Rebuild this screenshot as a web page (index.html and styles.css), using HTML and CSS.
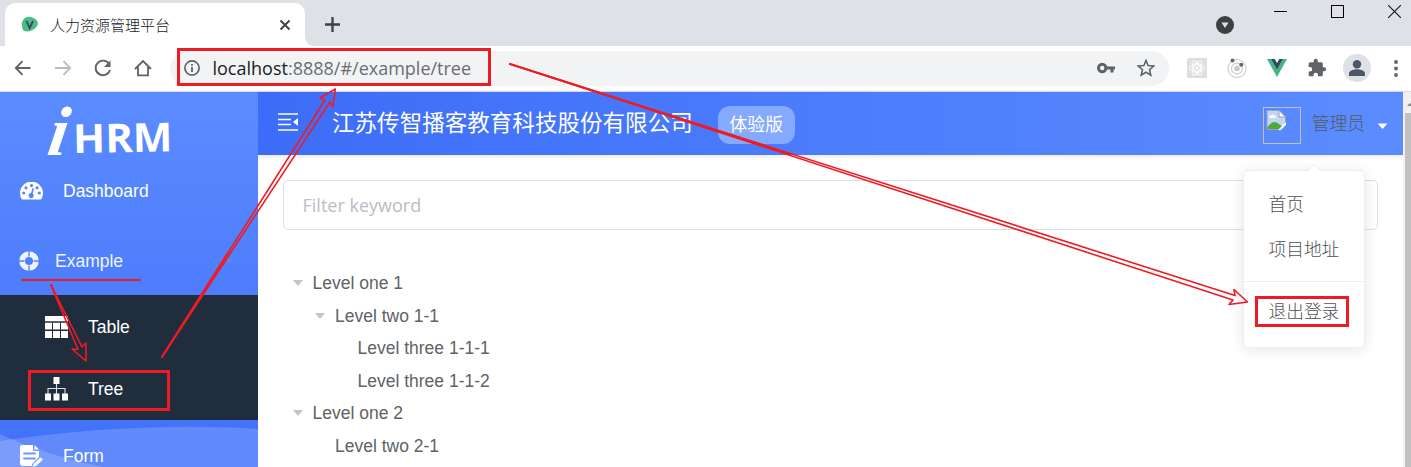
FILE: index.html
```
<!DOCTYPE html>
<html lang="zh-CN">
<head>
<meta charset="utf-8">
<title>人力资源管理平台</title>
<link rel="stylesheet" href="styles.css">
</head>
<body>
<div class="browser">
  <div class="tabstrip">
    <div class="tab">
      <svg class="favicon" width="18" height="18" viewBox="0 0 18 18"><path d="M2 4Q5 0 10 1Q17 3 17 8Q15 14 7 15.500Q1 16 1 10Q0 7 2 4Z" fill="#4dba87"/><path d="M5.500 5L8.700 12L12 5" fill="none" stroke="#35495e" stroke-width="1.800"/></svg>
      <span class="tab-title">人力资源管理平台</span>
      <svg class="tab-close" width="12" height="12" viewBox="0 0 12 12"><path d="M1.500 1.500L10.500 10.500M10.500 1.500L1.500 10.500" stroke="#3c4043" stroke-width="1.900"/></svg>
    </div>
    <svg class="tab-curve" width="10" height="10"><path d="M0 0Q0 10 10 10H0Z" fill="#fff"/></svg>
    <svg class="new-tab" width="15" height="15"><path d="M7.500 0V15M0 7.500H15" stroke="#3c4043" stroke-width="2.300"/></svg>
    <div class="window-controls">
      <svg class="tab-search" width="18" height="18"><circle cx="9" cy="9" r="9" fill="#3c4043"/><path d="M5.500 6.500H12.500L9 12Z" fill="#dee1e6"/></svg>
      <svg width="13" height="13"><path d="M0 6.500H13" stroke="#000"/></svg>
      <svg width="13" height="13"><rect x=".5" y=".5" width="12" height="12" fill="none" stroke="#000"/></svg>
      <svg width="13" height="13"><path d="M0 0L13 13M13 0L0 13" stroke="#111" stroke-width="1.100"/></svg>
    </div>
  </div>
  <div class="toolbar">
    <div class="nav-icons">
      <svg width="18" height="18" fill="none" stroke="#5f6368" stroke-width="1.800"><path d="M16.500 9H2M8.500 2.200L1.800 9L8.500 15.800"/></svg>
      <svg width="18" height="18" fill="none" stroke="#bbbdc0" stroke-width="1.800"><path d="M1 9H16M9.500 2.200L16.200 9L9.500 15.800"/></svg>
      <svg width="18" height="18"><path d="M15.300 5.200A7.300 7.300 0 1 0 16 11" fill="none" stroke="#5f6368" stroke-width="1.900"/><path d="M16.500 1.500V8H10Z" fill="#5f6368"/></svg>
      <svg width="18" height="18" fill="none" stroke="#5f6368" stroke-width="1.800"><path d="M1 10L9 2L17 10M4 8V16.300H14V8"/></svg>
    </div>
    <div class="omnibox">
      <svg width="16" height="16"><circle cx="8" cy="8" r="7.100" fill="none" stroke="#5f6368" stroke-width="1.700"/><path d="M8 7V12M8 4V5.800" stroke="#5f6368" stroke-width="1.800"/></svg>
      <span class="url"><b>localhost</b>:8888/#/example/tree</span>
      <svg class="key" width="18" height="12"><circle cx="5.200" cy="6" r="3.700" fill="none" stroke="#5f6368" stroke-width="3"/><path d="M8.500 6H18M15 6V10.500" stroke="#5f6368" stroke-width="3"/></svg>
      <svg class="star" width="18" height="18" viewBox="0 0 18 18"><path d="M9 1.500L11.100 6.500L16.700 7L12.500 10.700L13.800 16.200L9 13.300L4.200 16.200L5.500 10.700L1.300 7L6.900 6.500Z" fill="none" stroke="#5f6368" stroke-width="1.600"/></svg>
    </div>
    <div class="extensions">
      <svg width="20" height="20" viewBox="0 0 20 20"><rect width="20" height="20" rx="1.500" fill="#dedede"/><g fill="none" stroke="#fff" stroke-width=".9"><ellipse cx="10" cy="10" rx="8" ry="3.200"/><ellipse cx="10" cy="10" rx="8" ry="3.200" transform="rotate(60 10 10)"/><ellipse cx="10" cy="10" rx="8" ry="3.200" transform="rotate(120 10 10)"/><circle cx="10" cy="10" r="5"/></g><circle cx="10" cy="10" r="1.500" fill="#fff"/></svg>
      <svg width="20" height="20"><circle cx="10" cy="10.500" r="9" fill="none" stroke="#d4d4d4" stroke-width="1.300"/><circle cx="10" cy="10.500" r="5.500" fill="none" stroke="#d0d0d0" stroke-width="1.300"/><circle cx="10" cy="10.500" r="2.800" fill="#c8c8c8"/><circle cx="5.500" cy="2.500" r="2" fill="#666"/><circle cx="14.300" cy="6.700" r="2" fill="#666"/></svg>
      <svg width="20" height="18"><path d="M0 0H4L10 10L16 0H20L10 18Z" fill="#41b883"/><path d="M4 0H7.700L10 4L12.300 0H16L10 10.500Z" fill="#35495e"/></svg>
      <svg width="20" height="20" viewBox="0 0 24 24"><path d="M20.500 11H19V7c0-1.100-.9-2-2-2h-4V3.500a2.500 2.500 0 0 0-5 0V5H4c-1.100 0-2 .9-2 2v3.800h1.500a2.700 2.700 0 0 1 0 5.400H2V20c0 1.100.9 2 2 2h3.800v-1.500a2.700 2.700 0 0 1 5.400 0V22H17c1.100 0 2-.9 2-2v-4h1.500a2.500 2.500 0 0 0 0-5z" fill="#5f6368"/></svg>
      <svg class="profile" width="28" height="28"><circle cx="14" cy="14" r="14" fill="#dee1e6"/><circle cx="14" cy="10.200" r="4.200" fill="#4b586b"/><path d="M6 22V19.500C6 16 12 15.200 14 15.200S22 16 22 19.500V22Z" fill="#4b586b"/></svg>
      <svg class="more" width="4" height="17" fill="#5f6368"><circle cx="2" cy="2" r="1.900"/><circle cx="2" cy="8.500" r="1.900"/><circle cx="2" cy="15" r="1.900"/></svg>
    </div>
  </div>

  <div class="page">
    <aside class="sidebar">
      <div class="logo"><span class="logo-i">i</span><span class="logo-text">HRM</span></div>
      <nav>
        <div class="item wide">
          <svg width="23" height="18" viewBox="0 0 23 18"><path d="M2 17.500A11.500 11.500 0 1 1 21 17.500Z" fill="#fff"/><g fill="#5486ff"><circle cx="3.700" cy="11" r="1.600"/><circle cx="6" cy="5.800" r="1.600"/><circle cx="11.500" cy="3.600" r="1.600"/><circle cx="17" cy="5.800" r="1.600"/><circle cx="19.300" cy="11" r="1.600"/><path d="M12.600 6L14 6.400L12.700 11.500A2.600 2.600 0 1 1 11 11Z"/></g></svg>
          <span>Dashboard</span>
        </div>
        <div class="item example">
          <svg width="20" height="20"><circle cx="10" cy="10" r="6.900" fill="none" stroke="#f0f4ff" stroke-width="5.800"/><path d="M10 0V5.500M10 14.500V20M0 10H5.500M14.500 10H20" stroke="#5081ff" stroke-width="1.300"/></svg>
          <span>Example</span>
          <svg class="chevron" width="11" height="6"><path d="M.5 5.500L5.500 1L10.500 5.500" fill="none" stroke="#7b93bb" stroke-width="1.200"/></svg>
        </div>
        <div class="submenu">
          <div class="item">
            <svg width="23" height="22" fill="#fff"><path d="M0 0H23V5H0ZM0 7H7V13.500H0ZM8 7H15V13.500H8ZM16 7H23V13.500H16ZM0 15H7V22H0ZM8 15H15V22H8ZM16 15H23V22H16Z"/><path d="M0 6H23" stroke="#8e96a0"/></svg>
            <span>Table</span>
          </div>
          <div class="item">
            <svg width="23" height="24"><path d="M8.500 0H14.500V7H8.500ZM0 16.500H6V23.500H0ZM8.500 16.500H14.500V23.500H8.500ZM17 16.500H23V23.500H17Z" fill="#fff"/><path d="M11.500 7V17M3 17V11.500H20V17" fill="none" stroke="#dce1e5" stroke-width="1.100"/></svg>
            <span>Tree</span>
          </div>
        </div>
        <div class="item wide form">
          <svg width="23" height="23"><path d="M2 1H13V6Q13 7 14 7H19V13L12 20V22H3Q0 22 0 19V3Q0 1 2 1ZM14.500 1L19 5.500H14.500Z" fill="#fff"/><path d="M4 9.500H15M4 14.500H15" stroke="#6f96ff" stroke-width="1.800" stroke-linecap="round"/><path d="M12.500 22.500L14 19.500L20.500 13.500L23 15.500L16 22Z" fill="#fff"/></svg>
          <span>Form</span>
        </div>
      </nav>
      <svg class="waves" width="258" height="47"><path d="M0 21Q110 5 210 7Q235 7 258 9V47H0Z" fill="#fff" fill-opacity=".17"/><path d="M0 14Q45 35 103 47H0Z" fill="#fff" fill-opacity=".17"/></svg>
    </aside>
    <main>
      <header class="navbar">
        <svg class="fold" width="20" height="18"><path d="M0 1H20M0 6.500H13M0 11.500H13M0 17H20" stroke="#fff" stroke-width="1.500"/><path d="M20 5V13L15 9Z" fill="#fff"/></svg>
        <span class="company">江苏传智播客教育科技股份有限公司</span>
        <span class="badge">体验版</span>
        <div class="user">
          <div class="avatar"><svg width="20" height="20"><path d="M1 .5H13L19.500 7V19.500H1Z" fill="#c3d6f6" stroke="#9aa1ab"/><path d="M13 .5V7H19.500Z" fill="#fff" stroke="#9aa1ab"/><path d="M3 8Q3 5 6 5Q9 4 10 8Z" fill="#fff"/><path d="M1.500 19V17Q7 9 13 14L17 17L14 19Z" fill="#54a83a"/><path d="M20 12L12 20H15L20 15Z" fill="#fff"/><path d="M20 15L15 20H20Z" fill="#5a8aff"/></svg></div>
          <span class="user-name">管理员</span>
          <svg class="caret" width="11" height="7"><path d="M.5.500H10.500L5.500 6Z" fill="#fff"/></svg>
        </div>
      </header>
      <section class="content">
        <div class="filter">Filter keyword</div>
        <div class="tree">
          <div class="node"><i></i>Level one 1</div>
          <div class="node l2"><i></i>Level two 1-1</div>
          <div class="node l3 leaf"><i></i>Level three 1-1-1</div>
          <div class="node l3 leaf"><i></i>Level three 1-1-2</div>
          <div class="node"><i></i>Level one 2</div>
          <div class="node l2 leaf"><i></i>Level two 2-1</div>
        </div>
      </section>
    </main>
    <div class="scrollbar"><svg width="8" height="21"><path d="M4 14L7 11L10 14Z" fill="#888"/></svg><div class="thumb"></div></div>
  </div>
</div>

<div class="dropdown">
  <svg class="pointer" width="14" height="8"><path d="M0 7.500L7 .5L14 7.500" fill="#fff" stroke="#ebeef5"/></svg>
  <div class="option">首页</div>
  <div class="option">项目地址</div>
  <div class="option divided">退出登录</div>
</div>

<svg class="annotations" width="1411" height="467" fill="none" stroke="#ed1c24">
  <g stroke-width="3"><rect x="178.500" y="49.500" width="311" height="35"/><rect x="29.500" y="371.500" width="139" height="38"/><rect x="1256.500" y="297.500" width="91" height="28"/></g>
  <path d="M22 280H140" stroke-width="2" stroke-linecap="round"/>
  <g stroke-width="1.600" stroke-linejoin="round">
    <path d="M51 285L78 349.500L72 349L86 361L86 343L82 347Z"/>
    <path d="M162 357L325 100L320 98L335.300 89L333 106.500L330 102Z"/>
    <path d="M510 64L1235 295.500L1234 289.500L1247.500 302L1229 304.500L1233 300Z"/>
  </g>
  <g stroke-width="2.200" stroke-linecap="round"><path d="M51 285L60 305M162 357L228 253M510 64L790 154"/></g>
</svg>
</body>
</html>
```
FILE: styles.css
```
* { box-sizing: border-box; }
body {
  margin: 0;
  width: 1411px;
  height: 467px;
  overflow: hidden;
  position: relative;
  background: #fff;
  font-family: "Liberation Sans", "Noto Sans CJK SC", sans-serif;
  font-size: 17.5px;
}
svg { display: block; flex-shrink: 0; }
.browser { height: 467px; display: flex; flex-direction: column; }
.tabstrip { height: 46px; flex-shrink: 0; background: #dee1e6; display: flex; }
.tab {
  width: 300px;
  height: 43px;
  margin: 3px 0 0 5px;
  padding: 0 14px 0 16px;
  border-radius: 10px 10px 0 0;
  background: #fff;
  display: flex;
  align-items: center;
}
.tab-title {
  margin-left: 11px;
  font: 300 15px "Noto Sans CJK SC", sans-serif;
  color: #202124;
}
.tab-close { margin-left: auto; }
.tab-curve { align-self: flex-end; }
.new-tab { margin: 17px 0 0 10px; }
.window-controls { margin-left: auto; display: flex; padding: 5px 10px 0 0; }
.window-controls svg { margin-left: 44px; }
.window-controls .tab-search { margin: 11px -4px 0 0; }
.toolbar {
  height: 46px;
  flex-shrink: 0;
  border-bottom: 1px solid #dadce0;
  display: flex;
  align-items: center;
  padding: 0 0 1px 14px;
}
.nav-icons { display: flex; gap: 22px; }
.omnibox {
  margin-left: 18px;
  width: 999px;
  height: 35px;
  border-radius: 18px;
  background: #f1f3f4;
  display: flex;
  align-items: center;
  padding: 0 14px;
}
.url {
  margin-left: 12.5px;
  font: 18px "Open Sans", sans-serif;
  color: #6a6e73;
  white-space: nowrap;
}
.url b { font-weight: 400; color: #202124; }
.key { margin-left: auto; }
.star { margin-left: 22px; }
.extensions { display: flex; align-items: center; margin-left: 17.500px; }
.extensions svg { margin-right: 20px; }
.extensions .profile { margin: 0 23px 0 -4px; }
.extensions .more { margin: 0; }
.page { flex: 1; min-height: 0; display: flex; }
.sidebar {
  width: 258px;
  flex-shrink: 0;
  overflow: hidden;
  position: relative;
  color: #fff;
  background: linear-gradient(#5b8cff, #4170fa);
}
.logo { height: 64.500px; padding-left: 44px; display: flex; align-items: flex-start; }
.logo-i {
  width: 29px;
  font: italic bold 70px/68px "Liberation Serif", serif;
  transform: translateY(6px) skewX(-9deg);
  transform-origin: left bottom;
}
.logo-text {
  font: 700 40px/40px "Open Sans", sans-serif;
  margin-top: 26px;
  transform: rotate(-1deg) scaleX(1.05);
  transform-origin: left;
}
.item { height: 69.500px; display: flex; align-items: center; padding-left: 19px; gap: 16px; }
.item > span { padding-top: 1px; }
.item.wide { gap: 20px; padding-left: 20px; }
.item.example { height: 69px; padding-right: 27px; padding-top: 1px; color: #f0f4ff; }
.chevron { margin: -4px 0 0 auto; }
.submenu { background: #1f2d3d; height: 125px; }
.submenu .item { height: 62.500px; padding: 1px 0 0 45px; gap: 20px; }
.waves { position: absolute; left: 0; bottom: 0; }
.form { position: relative; z-index: 1; padding-top: 2px; }
main { flex: 1; min-width: 0; }
.navbar {
  height: 63px;
  display: flex;
  align-items: center;
  padding: 0 15px 0 20px;
  color: #fff;
  background: linear-gradient(to right, #3d6df8, #5b8cff);
  box-shadow: 0 1px 5px rgba(0, 21, 41, .12);
}
.fold { margin-bottom: 4px; }
.company { margin-left: 34px; padding-bottom: 5px; font: 22.550px "Noto Sans CJK SC", sans-serif; white-space: nowrap; }
.badge {
  margin: 3px 0 0 25px;
  width: 77px;
  height: 38px;
  border-radius: 12px;
  background: #84a9fe;
  text-align: center;
  font: 400 17.800px/34px "Noto Sans CJK SC", sans-serif;
}
.user {
  margin-left: auto;
  display: flex;
  align-items: center;
  color: #56585c;
  font: 300 17.800px "Noto Sans CJK SC", sans-serif;
}
.user-name { padding-bottom: 3px; }
.avatar { width: 38px; height: 37px; margin: 4px 11px 0 0; padding: 2px; border: 1px solid #c0c0c0; }
.caret { margin: 5px 0 0 12px; }
.content { padding: 25px; }
.filter {
  height: 50px;
  border: 1px solid #dcdfe6;
  border-radius: 5px;
  padding-left: 18.500px;
  color: #b8bdc6;
  font: 18px/48px "Open Sans", sans-serif;
}
.tree { margin-top: 37px; color: #606266; }
.node { height: 32.500px; line-height: 32.500px; display: flex; align-items: center; padding-left: 9.500px; white-space: nowrap; }
.node i { margin-right: 10px; border: 5px solid transparent; border-top: 6px solid #c0c4cc; border-bottom: 0; }
.node.leaf i { visibility: hidden; }
.node.l2 { padding-left: 32px; }
.node.l3 { padding-left: 54.500px; }
.scrollbar { width: 8px; background: #f1f1f1; display: flex; flex-direction: column; }
.thumb { flex: 1; margin-left: 2px; background: #c1c1c1; }
.dropdown {
  position: absolute;
  left: 1243px;
  top: 170px;
  width: 122px;
  height: 178px;
  padding: 12px 0;
  border: 1px solid #ebeef5;
  border-radius: 5px;
  background: #fff;
  box-shadow: 0 2px 15px rgba(0, 0, 0, .1);
  color: #505256;
}
.pointer { position: absolute; left: 63px; top: -7px; }
.option { height: 45px; padding-left: 24.500px; font: 300 17.700px/41px "Noto Sans CJK SC", sans-serif; }
.option.divided { border-top: 1px solid #ebeef5; margin-top: 8px; padding-top: 8px; height: 54px; }
.annotations { position: absolute; left: 0; top: 0; }
```
